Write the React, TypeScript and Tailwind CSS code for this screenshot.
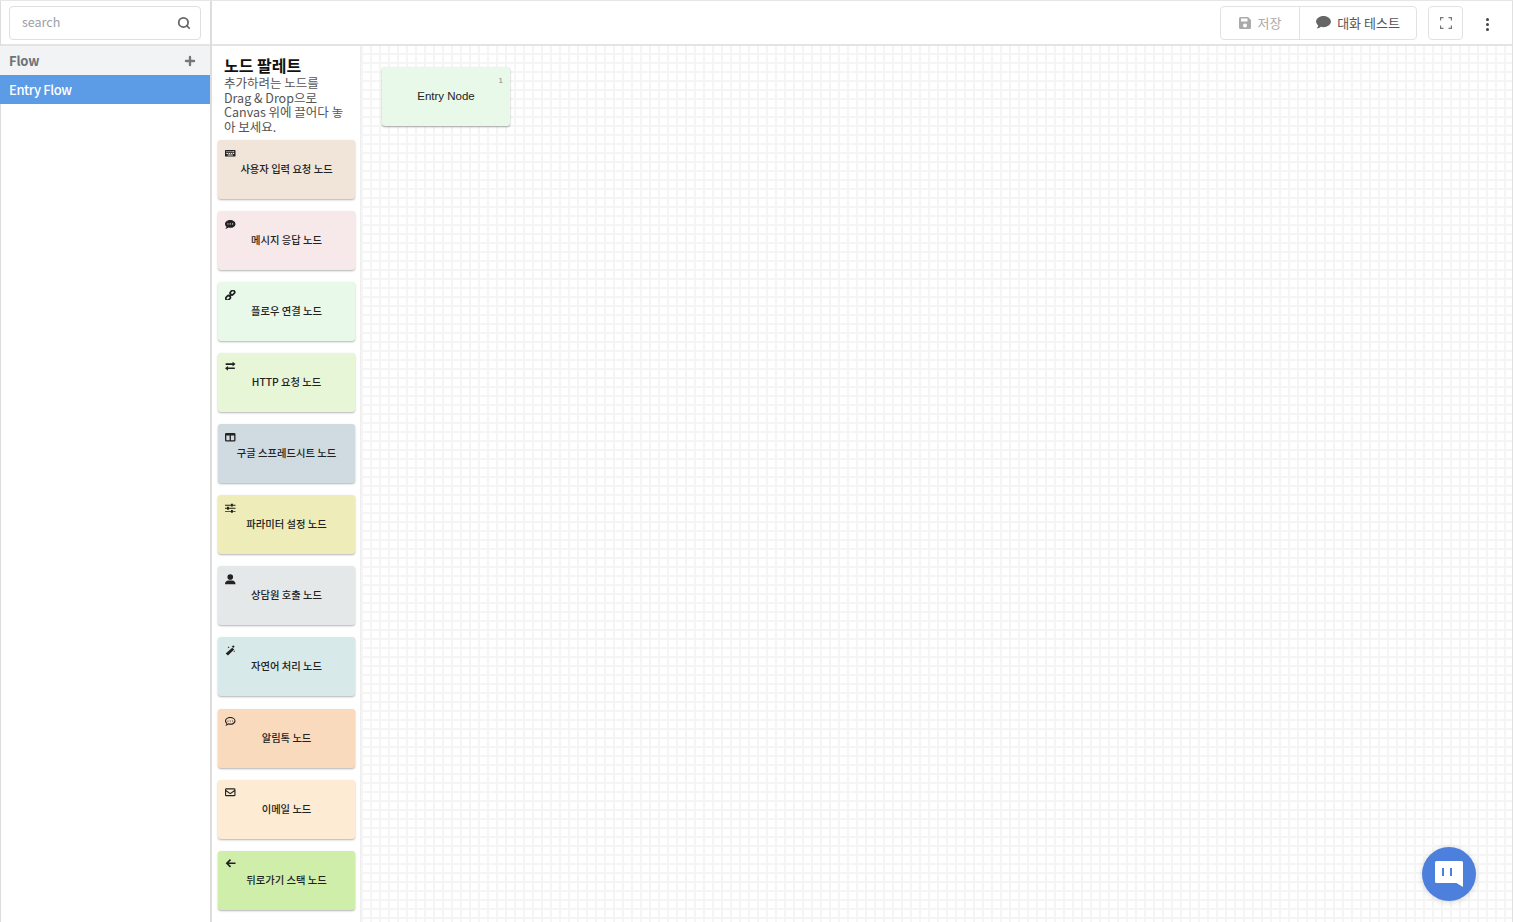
import { Search, Plus } from "lucide-react";
import React from "react";

const I = ({ children }: { children: React.ReactNode }) => (
  <svg viewBox="0 0 16 16" className="w-[10.500px] h-[10.500px] text-[#222]" fill="currentColor" stroke="none">{children}</svg>
);

const icons: Record<string, React.ReactNode> = {
  keyboard: <I><path fillRule="evenodd" d="M1 3h14a1 1 0 0 1 1 1v8a1 1 0 0 1-1 1H1a1 1 0 0 1-1-1V4a1 1 0 0 1 1-1zm1 2v1.500h2V5zm3 0v1.500h2V5zm3 0v1.500h2V5zm3 0v1.500h3V5zM2 7.500V9h3V7.500zm4 0V9h2V7.500zm3 0V9h2V7.500zm3 0V9h2V7.500zM4 10v1.300h8V10z" /></I>,
  message: <I><path fillRule="evenodd" d="M8 1.500c4.400 0 8 2.700 8 6s-3.600 6-8 6c-1 0-1.900-.1-2.800-.4C4 14 2.300 15 .5 15c1-1 1.700-2.300 1.800-3.300C.9 10.600 0 9.100 0 7.500c0-3.300 3.600-6 8-6zM4.500 6.500a1 1 0 1 0 0 2 1 1 0 0 0 0-2zm3.500 0a1 1 0 1 0 0 2 1 1 0 0 0 0-2zm3.500 0a1 1 0 1 0 0 2 1 1 0 0 0 0-2z" /></I>,
  link: <I><g fill="none" stroke="currentColor" strokeWidth="2.600"><rect x="7.500" y="1.300" width="7.500" height="5.500" rx="2.700" transform="rotate(-45 11.200 4)" /><rect x="1" y="9.200" width="7.500" height="5.500" rx="2.700" transform="rotate(-45 4.800 12)" /><path d="M6 10l4-4" /></g></I>,
  exchange: <I><path d="M1 3.500h10.500V1L16 4.700l-4.500 3.700V6H1zM15 10H4.500V7.500L0 11.200l4.500 3.700V12.200H15z" /></I>,
  table: <I><path fillRule="evenodd" d="M2 1.500h12a2 2 0 0 1 2 2v9a2 2 0 0 1-2 2H2a2 2 0 0 1-2-2v-9a2 2 0 0 1 2-2zm0 4v7h5v-7zm7 0v7h5v-7z" /></I>,
  sliders: <I><path d="M0 2.500h9V1h3v1.500h4V4h-4v1.500H9V4H0zM0 7.200h3V5.800h3v1.400h10v1.600H6v1.400H3V8.800H0zM0 12h9v-1.500h3V12h4v1.500h-4V15H9v-1.500H0z" /></I>,
  user: <I><circle cx="8" cy="4.500" r="4.300" /><path d="M0 15.500c0-3.500 2.500-5.500 5-5.500h6c2.500 0 5 2 5 5.500z" /></I>,
  magic: <I><path d="M11 4l3 3-9.500 9L1 13zM12.500 0l.8 1.700 1.700.8-1.700.8-.8 1.700-.8-1.700L10 2.500l1.700-.8zM5.500 2l.5 1 1 .5-1 .5-.5 1-.5-1-1-.5 1-.5zM14 8l.5 1 1 .5-1 .5-.5 1-.5-1-1-.5 1-.5z" /></I>,
  comment: <I><path fillRule="evenodd" d="M8 1.500c4.400 0 8 2.700 8 6s-3.600 6-8 6c-1 0-1.900-.1-2.800-.4C4 14 2.300 15 .5 15c1-1 1.700-2.300 1.800-3.300C.9 10.600 0 9.100 0 7.500c0-3.300 3.600-6 8-6zm0 1.600c-3.600 0-6.400 2-6.400 4.400 0 1.200.7 2.300 1.900 3.100-.1.700-.3 1.300-.6 1.900.8-.3 1.600-.8 2.200-1.400 1 .3 1.900.4 2.900.4 3.600 0 6.400-2 6.400-4.400S11.600 3.100 8 3.100zM4.500 6.700a.9.9 0 1 1 0 1.800.9.9 0 0 1 0-1.800zm3.500 0a.9.9 0 1 1 0 1.800.9.9 0 0 1 0-1.800zm3.500 0a.9.9 0 1 1 0 1.800.9.9 0 0 1 0-1.800z" /></I>,
  mail: <I><path fillRule="evenodd" d="M2 2h12a2 2 0 0 1 2 2v8a2 2 0 0 1-2 2H2a2 2 0 0 1-2-2V4a2 2 0 0 1 2-2zm0 1.700c-.2 0-.3.100-.3.300v.7L8 9l6.300-4.300V4c0-.2-.1-.3-.3-.3zM1.700 6.800V12c0 .2.100.3.300.3h12c.2 0 .3-.1.300-.3V6.800L8 11z" /></I>,
  back: <I><path d="M7.500 1.500l1.800 1.800L5.800 6.800H16v2.400H5.800l3.500 3.500-1.800 1.800L1 8z" /></I>,
};

const nodes = [
  { label: "사용자 입력 요청 노드", bg: "bg-[#f1e5d9]", icon: "keyboard" },
  { label: "메시지 응답 노드", bg: "bg-[#f7e8ea]", icon: "message" },
  { label: "플로우 연결 노드", bg: "bg-[#e8f8e9]", icon: "link" },
  { label: "HTTP 요청 노드", bg: "bg-[#e8f6d8]", icon: "exchange" },
  { label: "구글 스프레드시트 노드", bg: "bg-[#cfdbe0]", icon: "table" },
  { label: "파라미터 설정 노드", bg: "bg-[#eeedb9]", icon: "sliders" },
  { label: "상담원 호출 노드", bg: "bg-[#e5e8e8]", icon: "user" },
  { label: "자연어 처리 노드", bg: "bg-[#d8e9e9]", icon: "magic" },
  { label: "알림톡 노드", bg: "bg-[#f9dabd]", icon: "comment" },
  { label: "이메일 노드", bg: "bg-[#fdebd3]", icon: "mail" },
  { label: "뒤로가기 스택 노드", bg: "bg-[#ceeeaa]", icon: "back" },
];

const gridBg =
  "bg-[linear-gradient(#f5f5f5_2px,transparent_2px),linear-gradient(90deg,#f5f5f5_2px,transparent_2px)] bg-[length:9px_9px] bg-[position:0px_7px]";

export default function App() {
  return (
    <div className="w-[1513px] h-[922px] flex overflow-hidden bg-white text-[#333] font-['Noto_Sans_CJK_KR','Noto_Sans',sans-serif] border-t border-[#e6e6e6]">
      <aside className="w-[212px] shrink-0 flex flex-col border-l border-r-2 border-[#dddddd]">
        <div className="h-[45px] shrink-0 flex items-center pl-[8px] border-b-2 border-[#e4e4e4]">
          <div className="w-[192px] h-[34px] flex items-center justify-between pl-[12px] pr-[9px] rounded-[4px] border border-[#dfdfdf] bg-white">
            <span className="text-[12.500px] text-[#9aa0a6]">search</span>
            <Search className="w-[14px] h-[14px] text-[#666]" strokeWidth={3} />
          </div>
        </div>
        <div className="-ml-px h-[29px] shrink-0 flex items-center justify-between pl-[9px] pr-[13px] bg-[#f2f3f5]">
          <span className="text-[13px] tracking-[-0.2px] font-bold text-[#6d7278]">Flow</span>
          <Plus className="w-[14px] h-[14px] text-[#777]" strokeWidth={4} />
        </div>
        <div className="-ml-px h-[29px] shrink-0 flex items-center pl-[9px] bg-[#5c9be6]">
          <span className="text-[13px] tracking-[-0.4px] font-medium text-white">Entry Flow</span>
        </div>
      </aside>
      <main className="flex-1 flex flex-col min-w-0 border-r border-[#e0e0e0]">
        <header className="h-[45px] shrink-0 flex items-center justify-end border-b-2 border-[#e4e4e4] pr-[11px]">
          <div className="flex h-[34px] rounded-[4px] border border-[#e2e2e2]">
            <div className="w-[79px] flex items-center justify-center gap-[7px] border-r border-[#e2e2e2] text-[13px] text-[#aaa]">
              <svg viewBox="0 0 12 12" className="w-[12px] h-[12px]" fill="#aaaaaa"><path fillRule="evenodd" d="M1.500 0H9l3 3v7.500A1.500 1.500 0 0 1 10.500 12h-9A1.500 1.500 0 0 1 0 10.500v-9A1.500 1.500 0 0 1 1.500 0zM2 1.500V4.500h6.500V1.500zM6 6.500a2 2 0 1 0 0 4 2 2 0 0 0 0-4z" /></svg>
              저장
            </div>
            <div className="w-[116px] flex items-center justify-center gap-[6px] text-[13px] text-[#555]">
              <svg viewBox="0 0 16 14" className="w-[15px] h-[13px]" fill="#666666"><path d="M8 0c4.400 0 8 2.700 8 6s-3.600 6-8 6c-1 0-1.900-.1-2.800-.4C4 12.500 2.300 13.500.5 13.500c1-1 1.700-2.300 1.800-3.300C.9 9.100 0 7.600 0 6c0-3.300 3.600-6 8-6z" /></svg>
              대화 테스트
            </div>
          </div>
          <div className="ml-[11px] w-[35px] h-[34px] flex items-center justify-center rounded-[4px] border border-[#e2e2e2]">
            <svg viewBox="0 0 12 12" className="w-[12px] h-[12px]" fill="none" stroke="#777777" strokeWidth="1.200"><path d="M.6 3.500V.6h2.900M8.500.6h2.900v2.900M11.400 8.500v2.900H8.500M3.500 11.400H.6V8.500" /></svg>
          </div>
          <div className="ml-[23px] mr-[12px] mt-[3px] w-[3px] flex flex-col gap-[2px]">
            <span className="w-[3px] h-[3px] rounded-full bg-[#444]" />
            <span className="w-[3px] h-[3px] rounded-full bg-[#444]" />
            <span className="w-[3px] h-[3px] rounded-full bg-[#444]" />
          </div>
        </header>
        <div className="flex-1 flex min-h-0">
          <section className="w-[149px] shrink-0 flex flex-col px-[6px] pt-[9px] border-r border-[#eeeeee]">
            <div className="pl-[6px] pr-[4px] text-[#555] h-[85px]">
              <h2 className="text-[16px] leading-[21px] font-bold text-[#111]">노드 팔레트</h2>
              <p className="text-[12.500px] leading-[14.500px] break-all">
                추가하려는 노드를
                <br />
                Drag &amp; Drop으로
                <br />
                Canvas 위에 끌어다 놓아 보세요.
              </p>
            </div>
            <div className="flex flex-col gap-[12.070px]">
              {nodes.map((n) => (
                <div key={n.label} className={`h-[59px] w-[137px] rounded-[3px] ${n.bg} shadow-[0_1px_2px_rgba(0,0,0,0.3)] flex flex-col px-[7px] pt-[8px]`}>
                  <div className="h-[10px] flex items-center">{icons[n.icon]}</div>
                  <div className="mt-[3px] text-center text-[10.300px] leading-[16px] font-medium text-[#222]">{n.label}</div>
                </div>
              ))}
            </div>
          </section>
          <section className={`relative flex-1 ${gridBg} pl-[21px] pt-[21px]`}>
            <div className="relative w-[128px] h-[59px] rounded-[3px] bg-[#e8f8e9] shadow-[0_1px_2px_rgba(0,0,0,0.35)] flex items-center justify-center font-['Liberation_Sans',sans-serif] text-[11.500px] text-[#222]">
              Entry Node
              <span className="absolute top-[8px] right-[7px] text-[8px] text-[#888]">1</span>
            </div>
            <div className="absolute left-[1061px] top-[801px] w-[54px] h-[54px] rounded-full bg-[#4d7fdc] shadow-[0_1px_6px_rgba(0,0,0,0.15)] flex items-center justify-center">
              <svg viewBox="0 0 28 26" className="w-[28px] h-[26px]">
                <path d="M1.500 0h25A1.500 1.500 0 0 1 28 1.500V26l-6.500-4H1.500A1.500 1.500 0 0 1 0 20.500v-19A1.500 1.500 0 0 1 1.500 0z" fill="white" />
                <rect x="7" y="7" width="2" height="8" fill="#4d7fdc" />
                <rect x="15" y="7" width="2" height="8" fill="#4d7fdc" />
              </svg>
            </div>
          </section>
        </div>
      </main>
    </div>
  );
}
